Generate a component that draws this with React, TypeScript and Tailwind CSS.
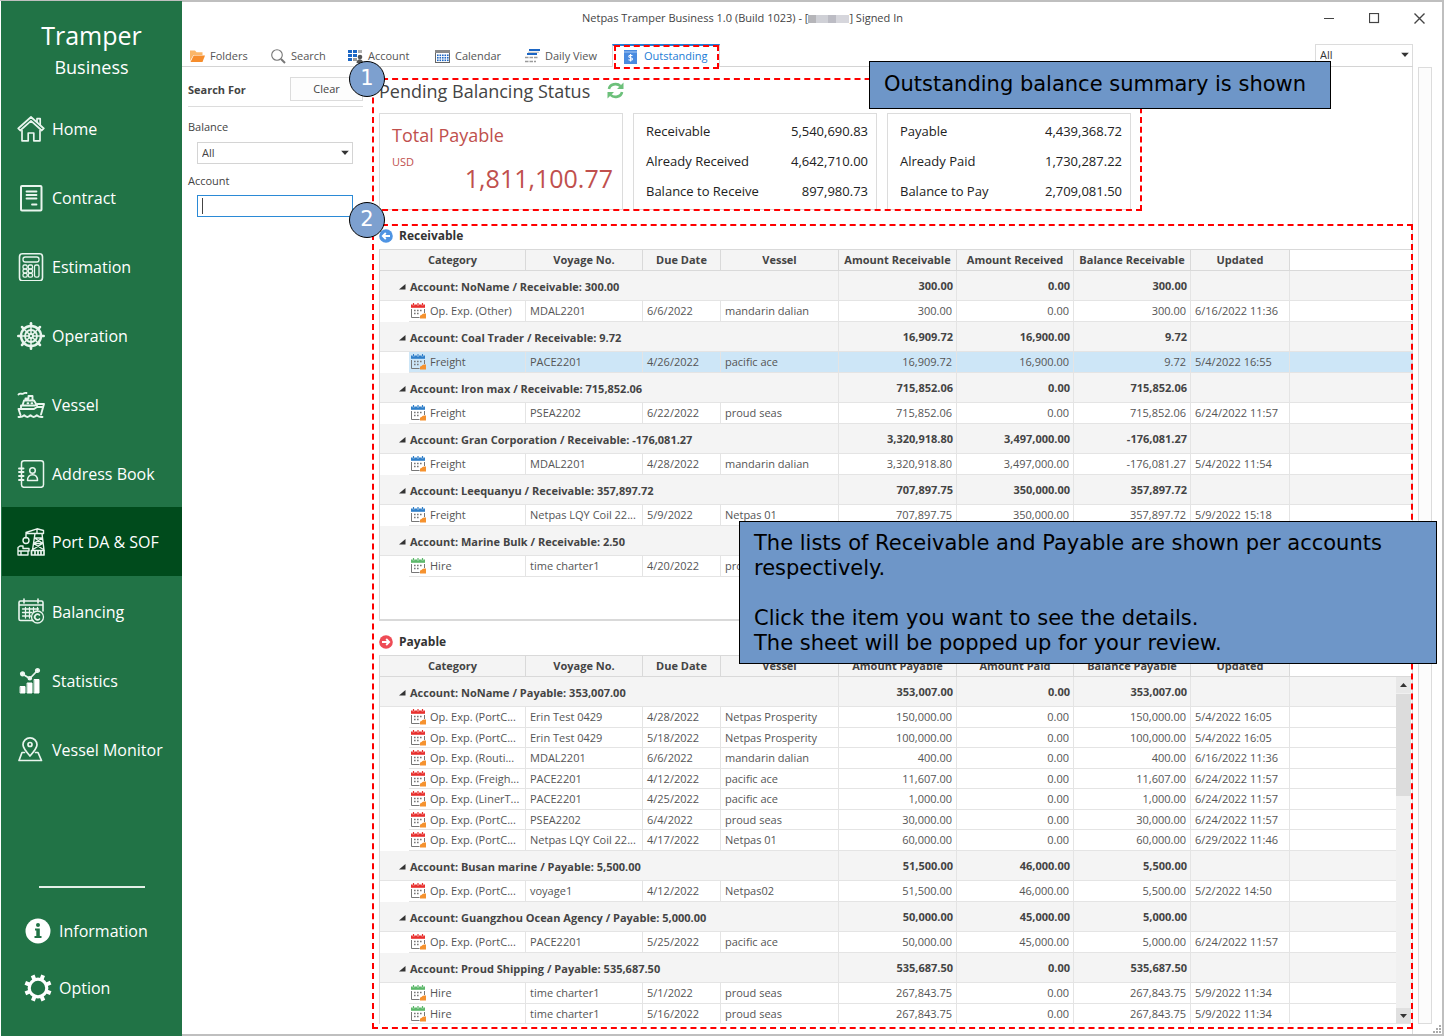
import React from "react";

type IconProps = { children: React.ReactNode; sw?: number };

function Glyph({ children, sw = 1.5 }: IconProps) {
  return (
    <svg width="28" height="28" viewBox="0 0 28 28" fill="none" stroke="#e9f5ee" strokeWidth={sw} strokeLinecap="round" strokeLinejoin="round" className="shrink-0">
      {children}
    </svg>
  );
}

const HomeIcon = () => (
  <Glyph sw={1.7}>
    <path d="M1.200 13.500 14 2l12.800 11.500-2 2L14 5.800 3.200 15.500z" />
    <path d="M5 15.500v10.300h6.200V18h5.600v7.800H23V15.500M20 7V3.700h3.200V10" />
  </Glyph>
);

const ContractIcon = () => (
  <Glyph sw={2}>
    <rect x="4" y="2" width="20.500" height="24.500" rx="1" />
    <path d="M9.500 7.500h10M9.500 11h10M9.500 14.500h10M15 20.500h4.500" strokeWidth="1.800" />
  </Glyph>
);

const CalculatorIcon = () => (
  <Glyph sw={1.3}>
    <rect x="2.500" y="0.800" width="23" height="27" rx="3" strokeWidth="1.600" />
    <rect x="6" y="4" width="16" height="5" rx="2.200" />
    {[6, 11.300].map((x) =>
      [12, 16.200, 20.400].map((y) => <rect key={`${x}-${y}`} x={x} y={y} width="4.200" height="3.800" rx="1.400" />)
    )}
    <rect x="17.500" y="12" width="4.500" height="12.200" rx="1.800" />
  </Glyph>
);

const HelmIcon = () => (
  <Glyph sw={1.5}>
    <circle cx="14" cy="14" r="10" strokeWidth="2.400" />
    <circle cx="14" cy="14" r="6" strokeWidth="1.800" />
    <circle cx="14" cy="14" r="2" strokeWidth="1.800" />
    {[0, 45, 90, 135, 180, 225, 270, 315].map((a) => (
      <g key={a} transform={`rotate(${a} 14 14)`}>
        <path d="M14 11.800V4" />
        <path d="M14 2.800V1.300" strokeWidth="2.600" />
      </g>
    ))}
  </Glyph>
);

const ShipIcon = () => (
  <Glyph sw={1.9}>
    <path d="M1.500 3.500c1.500-2 3 0 4.500-.8C7.500 1.700 8 1.500 9.500 2M8.500 9V7.500h3V5h4v4M5.500 14.500l1.500-5h10l3 5M4 18v-3.500h14l2.500-1.500h6.500l-3 10.500M1.500 18h15.500l3-2h6M1.500 18l2 6" />
    <path d="M1.500 26c2.200.3 4-.2 5.700-1.800 2 2.400 4.300 2.400 6.300 0 2 2.400 4.300 2.400 6.300 0 1.700 1.600 3.500 2.100 5.700 1.800" />
    <path d="M10.500 12.300h.8M14.500 12.300h.8" />
  </Glyph>
);

const AddressIcon = () => (
  <Glyph sw={1.5}>
    <rect x="4.500" y="0.800" width="22" height="26.500" rx="2.500" />
    <path d="M2 8.500h4.500M2 12h4.500M2 16h4.500M2 20h4.500" strokeWidth="1.900" />
    <circle cx="15.500" cy="10.500" r="2.800" />
    <path d="M10.500 20.500c0-3.800 2-5.800 5-5.800s5 2 5 5.800z" />
  </Glyph>
);

const CraneIcon = () => (
  <Glyph sw={1.4}>
    <path d="M9 4.500 20 .800l6.500 1.700v3H9V10M18 5.500 15.500 22M25 5.500 27 22M17.500 10h8M16.500 15.500h9.500M17.500 10l8.500 5.500M25.500 10l-9 5.500M16 21.500l9.500-6M26.500 21.500l-10-6M20 1v4.500" />
    <circle cx="9" cy="12.500" r="3" />
    <path d="M14.500 22.500H27V27H14.500zM18 22.500V27M21 22.500V27M24 22.500V27" strokeWidth="1.700" />
    <path d="M1 27v-7.500l2-1.500h3v2.500h6V23H1M11 23v4H1M4 23v4" />
  </Glyph>
);

const BalancingIcon = () => (
  <Glyph sw={1.3}>
    <path d="M16 22.500H3.500A1.500 1.500 0 0 1 2 21V4.500A1.500 1.500 0 0 1 3.500 3h21A1.500 1.500 0 0 1 26 4.500V13M2 7h24M7 1v4M21 1v4" strokeWidth="1.600" />
    <path d="M5.500 11h16M5.500 14.500h9.500M5.500 18h8M8.500 9.500v10.500M12.500 9.500v10.500M16.500 9.500v4M20.500 9.500v2.500" />
    <circle cx="20.500" cy="19" r="6" />
    <path d="M22.500 17a2.800 2.800 0 1 0 0 4" strokeWidth="1.700" />
  </Glyph>
);

const StatisticsIcon = () => (
  <Glyph sw={1.800}>
    <path d="M3.500 19.500h4.500V26H3.500zM10.500 16H15v10h-4.500zM17.500 12.500H22V26h-4.500z" fill="#fff" stroke="#fff" strokeWidth="1" />
    <path d="M5.500 7 12.800 11.500 20.500 3.500" />
    <circle cx="5.500" cy="6.800" r="1.700" fill="#fff" />
    <circle cx="12.800" cy="11.200" r="1.400" fill="#fff" />
    <circle cx="20.500" cy="3.500" r="1.700" fill="#fff" />
  </Glyph>
);

const MonitorIcon = () => (
  <Glyph sw={1.700}>
    <path d="M13 20C8.500 15 6 12 6 8.800a7 7 0 0 1 14 0c0 3.200-2.500 6.200-7 11.200z" />
    <circle cx="13" cy="8.500" r="2" />
    <path d="M7.500 16.500H5L2 24.500h22.500l-3.500-8h-2.500" />
  </Glyph>
);

const navItems = [
  { label: "Home", Icon: HomeIcon },
  { label: "Contract", Icon: ContractIcon },
  { label: "Estimation", Icon: CalculatorIcon },
  { label: "Operation", Icon: HelmIcon },
  { label: "Vessel", Icon: ShipIcon },
  { label: "Address Book", Icon: AddressIcon },
  { label: "Port DA & SOF", Icon: CraneIcon, active: true },
  { label: "Balancing", Icon: BalancingIcon },
  { label: "Statistics", Icon: StatisticsIcon },
  { label: "Vessel Monitor", Icon: MonitorIcon },
];

function Sidebar() {
  return (
    <aside className="ml-px flex w-[181px] shrink-0 flex-col bg-[#217346] text-white">
      <div className="flex h-[92px] flex-col items-center pt-[18px]">
        <div className="text-[25px] leading-8">Tramper</div>
        <div className="text-lg leading-8">Business</div>
      </div>
      <nav>
        {navItems.map(({ label, Icon, active }) => (
          <button
            key={label}
            type="button"
            className={
              active
                ? "ml-px flex h-[69px] w-[180px] items-center gap-[7px] bg-[#004b1c] pt-px pl-[15px] text-base font-medium whitespace-nowrap"
                : "flex h-[69px] w-full items-center gap-[7px] pt-[2px] pl-4 text-base font-medium whitespace-nowrap"
            }
          >
            <Icon />
            {label}
          </button>
        ))}
      </nav>
      <div className="mt-auto flex flex-col pb-5">
        <div className="mr-[37px] mb-[14px] ml-[38px] h-[2px] bg-[#e3efe8]" />
        <button type="button" className="flex h-[57px] items-center gap-[7px] pl-[23px] text-base font-medium">
          <svg width="28" height="28" viewBox="0 0 28 28">
            <circle cx="14" cy="14" r="12.500" fill="#fff" />
            <circle cx="14" cy="8" r="2" fill="#217346" />
            <path d="M11 11.500h4.800v7.500H17.500v2h-7v-2h1.800v-5.500H11z" fill="#217346" />
          </svg>
          Information
        </button>
        <button type="button" className="flex h-[57px] items-center gap-[7px] pl-[23px] text-base font-medium">
          <svg width="28" height="28" viewBox="0 0 28 28" fill="none" stroke="#fff">
            <circle cx="14" cy="14" r="8.800" strokeWidth="3.200" />
            {[22, 67, 112, 157, 202, 247, 292, 337].map((a) => (
              <path key={a} d="M14 5V.300" strokeWidth="4" transform={`rotate(${a} 14 14)`} />
            ))}
          </svg>
          Option
        </button>
      </div>
    </aside>
  );
}

const FolderIcon = () => (
  <svg width="15" height="14" viewBox="0 0 15 14">
    <path d="M0 12V1.500h5l1.500 1.800h6V6H3.500z" fill="#fbb667" />
    <path d="M3.700 6.500H15L12.500 13H.5z" fill="#f68d2c" />
  </svg>
);
const SearchIcon = () => (
  <svg width="15" height="15" viewBox="0 0 15 15" fill="none" stroke="#777">
    <circle cx="6" cy="6" r="5.300" strokeWidth="1.100" />
    <path d="m10 10 4 4" strokeWidth="1.900" />
  </svg>
);
const AccountIcon = () => (
  <svg width="15" height="14" viewBox="0 0 15 14">
    {[0, 4, 8].map((y) => (
      <g key={y}>
        <rect x="0" y={y + 1} width="4" height="3" fill="#1c66c4" />
        <rect x="5" y={y + 1} width="4" height="3" fill={y === 8 ? "#9a9a9a" : "#1c66c4"} />
      </g>
    ))}
    <rect x="10" y="1" width="4" height="3" fill="#b0b0b0" />
    <circle cx="12" cy="8" r="2.300" fill="#555" />
    <path d="M8.500 14c0-5 6.500-5 6.500 0z" fill="#555" />
  </svg>
);
const CalendarIcon = () => (
  <svg width="15" height="13" viewBox="0 0 15 13">
    <rect x=".5" y=".5" width="14" height="12" fill="#fff" stroke="#666" />
    <path d="M0 0h15v3H0z" fill="#8a8a8a" />
    {[4.500, 7, 9.500].map((y) =>
      [2, 4.500, 7, 9.500, 12].map((x) => <rect key={`${x}${y}`} x={x} y={y} width="1.600" height="1.600" fill="#1c66c4" />)
    )}
  </svg>
);
const DailyIcon = () => (
  <svg width="15" height="14" viewBox="0 0 15 14">
    <path d="M4 1h11M2 5h10" stroke="#1c66c4" strokeWidth="2" />
    <path d="M3 3.300h11" stroke="#bbb" />
    <path d="M0 8.500h13M0 12.500h11" stroke="#9a9a9a" strokeWidth="1.600" strokeDasharray="3.500 1" />
  </svg>
);
const SheetIcon = () => (
  <svg width="13" height="14" viewBox="0 0 13 14">
    <path d="M0 0h13v14H0z" fill="#4a8be0" />
    <path d="M0 2h13" stroke="#a9c9f2" />
    <path d="M8.500 5.700c-.6-.6-3.700-.9-3.700.8 0 1.700 3.700.8 3.700 2.500 0 1.600-3.200 1.400-4 .6M6.600 4v7.500" stroke="#fff" strokeWidth="1.100" fill="none" />
  </svg>
);

const tabs = [
  { label: "Folders", Icon: FolderIcon, width: "w-[81px]" },
  { label: "Search", Icon: SearchIcon, width: "w-[77px]" },
  { label: "Account", Icon: AccountIcon, width: "w-[87px]" },
  { label: "Calendar", Icon: CalendarIcon, width: "w-[90px]" },
  { label: "Daily View", Icon: DailyIcon, width: "w-[87px]" },
];

const Caret = () => (
  <svg width="8" height="5" viewBox="0 0 8 5" className="pointer-events-none absolute top-1/2 right-1 -translate-y-1/2">
    <path d="M0 0h8L4 4.500z" fill="#333" />
  </svg>
);

function TopBar() {
  return (
    <header>
      <div className="flex h-[42px] items-start justify-between">
        <h1 className="pl-[400px] text-[11px] leading-8 whitespace-pre text-[#444]">
          Netpas Tramper Business 1.0 (Build 1023) - [
          <span className="inline-flex h-2 w-[41px] align-middle">
            <span className="w-2 bg-[#b5b5b9]" />
            <span className="w-3 bg-[#cfd0d6]" />
            <span className="w-2 bg-[#bcbcc4]" />
            <span className="flex-1 bg-[#d6d6dc]" />
          </span>
          ] Signed In
        </h1>
        <div className="flex">
          <button type="button" aria-label="Minimize" className="flex h-8 w-[45px] items-center justify-center">
            <svg width="11" height="11" viewBox="0 0 11 11" stroke="#444"><path d="M0 5.500h10" /></svg>
          </button>
          <button type="button" aria-label="Maximize" className="flex h-8 w-[45px] items-center justify-center">
            <svg width="11" height="11" viewBox="0 0 11 11" stroke="#444" fill="none"><rect x=".5" y=".5" width="9" height="9" strokeWidth="1.200" /></svg>
          </button>
          <button type="button" aria-label="Close" className="flex h-8 w-[45px] items-center justify-center">
            <svg width="11" height="11" viewBox="0 0 11 11" stroke="#444" strokeWidth="1.400"><path d="m.5.500 10 10M10.500.500l-10 10" /></svg>
          </button>
        </div>
      </div>
      <div className="mr-[29px] flex h-[23px] border-b border-[#d4d4d4] pl-2 text-[#555]">
        {tabs.map(({ label, Icon, width }) => (
          <button key={label} type="button" className={`${width} flex items-center gap-[5px] pt-[2px] whitespace-nowrap`}>
            <Icon />
            {label}
          </button>
        ))}
        <button type="button" className="relative flex h-[23px] w-[108px] items-center gap-[7px] border-t-2 border-r border-l border-t-[#2b7cd3] border-r-[#d9d9d9] border-l-[#d9d9d9] bg-white pl-[11px] text-[#1c7cd5]">
          <SheetIcon />
          Outstanding
          <span className="absolute -top-px right-0 -bottom-[2px] left-px border-2 border-dashed border-[#f00]" />
        </button>
        <div className="relative ml-auto h-[22px] w-[98px]">
          <select aria-label="Filter" className="h-full w-full appearance-none border border-b-0 border-[#dcdcdc] bg-white pl-1 text-[11px] text-[#333]">
            <option>All</option>
          </select>
          <Caret />
        </div>
      </div>
    </header>
  );
}

function FilterPanel() {
  return (
    <form className="w-[191px] shrink-0 pt-[10px] pr-[10px] pl-[6px] text-[#444]">
      <div className="flex h-[30px] items-start justify-between border-b border-[#dcdcdc]">
        <h2 className="pt-[5px] font-bold">Search For</h2>
        <button type="button" className="h-6 w-[73px] border border-[#dcdcdc] bg-[#fdfdfd]">Clear</button>
      </div>
      <label htmlFor="balance" className="mt-[12px] block leading-4">Balance</label>
      <div className="relative mt-[7px] mr-[10px] ml-[9px]">
        <select id="balance" className="block h-[22px] w-full appearance-none border border-[#d4d4d4] bg-white pl-1 text-[11px]">
          <option>All</option>
        </select>
        <Caret />
      </div>
      <label htmlFor="account" className="mt-[9px] block leading-4">Account</label>
      <div className="relative mt-[6px] mr-[10px] ml-[9px]">
        <input id="account" type="text" className="block h-[22px] w-full border border-[#2b8ad6] bg-white pl-1 outline-none" />
        <span className="absolute top-[3px] left-[5px] h-4 w-px bg-[#444]" />
      </div>
    </form>
  );
}

function SummaryCard({ rows }: { rows: [string, string][] }) {
  return (
    <dl className="flex h-[97px] w-[244px] flex-col border border-[#dcdcdc] bg-white pt-[3px] pr-2 pl-3 text-[13px] text-[#222]">
      {rows.map(([k, v]) => (
        <div key={k} className="flex h-[30px] items-center justify-between">
          <dt>{k}</dt>
          <dd>{v}</dd>
        </div>
      ))}
    </dl>
  );
}

function Summary() {
  return (
    <section className="relative">
      <div className="flex h-[46px] items-center gap-[17px] pt-px text-[#444]">
        <h2 className="text-lg leading-6">Pending Balancing Status</h2>
        <button type="button" aria-label="Refresh">
          <svg width="17" height="17" viewBox="0 0 17 17" fill="none" stroke="#6cc07a" strokeWidth="2.600">
            <path d="M2 7a6.500 5.500 0 0 1 11.500-2.800M15 10a6.500 5.500 0 0 1-11.500 2.800" />
            <path d="M16.500.500V7H10zM.5 16.500V10H7z" fill="#6cc07a" stroke="none" />
          </svg>
        </button>
      </div>
      <div className="flex gap-[10px]">
        <div className="flex h-[97px] w-[244px] flex-col border border-[#dcdcdc] bg-white pt-[9px] pr-[9px] pl-3 text-[#c0504d]">
          <div className="text-lg leading-6">Total Payable</div>
          <div className="mt-[7px] leading-4">USD</div>
          <div className="-mt-[6px] text-right text-[25px] leading-7">1,811,100.77</div>
        </div>
        <SummaryCard rows={[["Receivable", "5,540,690.83"], ["Already Received", "4,642,710.00"], ["Balance to Receive", "897,980.73"]]} />
        <SummaryCard rows={[["Payable", "4,439,368.72"], ["Already Paid", "1,730,287.22"], ["Balance to Pay", "2,709,081.50"]]} />
      </div>
      <div className="pointer-events-none absolute top-[11px] -bottom-px -left-[7px] w-[770px] border-2 border-dashed border-[#f00]" />
      <div className="absolute -top-[6px] left-[490px] flex h-12 w-[462px] items-center border border-black bg-[#6e96c8] px-[14px] font-[DejaVu_Sans,Verdana,sans-serif] text-[21px] whitespace-nowrap text-black">
        Outstanding balance summary is shown
      </div>
      <StepBadge n="1" place="-top-[6px] -left-[30px]" />
    </section>
  );
}

function StepBadge({ n, place }: { n: string; place: string }) {
  return (
    <span className={`absolute ${place} flex h-9 w-9 items-center justify-center rounded-full border border-black bg-[#7da0cf] font-[DejaVu_Sans,Verdana,sans-serif] text-[21px] text-white`}>
      {n}
    </span>
  );
}

type Item = [kind: "red" | "blue" | "green", category: string, voyage: string, due: string, vessel: string, amount: string, settled: string, balance: string, updated: string];
type Group = { title: string; totals: [string, string, string]; items: Item[]; selected?: boolean };

const receivable: Group[] = [
  { title: "Account: NoName / Receivable: 300.00", totals: ["300.00", "0.00", "300.00"], items: [["red", "Op. Exp. (Other)", "MDAL2201", "6/6/2022", "mandarin dalian", "300.00", "0.00", "300.00", "6/16/2022 11:36"]] },
  { title: "Account: Coal Trader / Receivable: 9.72", totals: ["16,909.72", "16,900.00", "9.72"], selected: true, items: [["blue", "Freight", "PACE2201", "4/26/2022", "pacific ace", "16,909.72", "16,900.00", "9.72", "5/4/2022 16:55"]] },
  { title: "Account: Iron max / Receivable: 715,852.06", totals: ["715,852.06", "0.00", "715,852.06"], items: [["blue", "Freight", "PSEA2202", "6/22/2022", "proud seas", "715,852.06", "0.00", "715,852.06", "6/24/2022 11:57"]] },
  { title: "Account: Gran Corporation / Receivable: -176,081.27", totals: ["3,320,918.80", "3,497,000.00", "-176,081.27"], items: [["blue", "Freight", "MDAL2201", "4/28/2022", "mandarin dalian", "3,320,918.80", "3,497,000.00", "-176,081.27", "5/4/2022 11:54"]] },
  { title: "Account: Leequanyu / Receivable: 357,897.72", totals: ["707,897.75", "350,000.00", "357,897.72"], items: [["blue", "Freight", "Netpas LQY Coil 22...", "5/9/2022", "Netpas 01", "707,897.75", "350,000.00", "357,897.72", "5/9/2022 15:18"]] },
  { title: "Account: Marine Bulk / Receivable: 2.50", totals: ["", "", ""], items: [["green", "Hire", "time charter1", "4/20/2022", "pro", "", "", "", ""]] },
];

const payable: Group[] = [
  {
    title: "Account: NoName / Payable: 353,007.00",
    totals: ["353,007.00", "0.00", "353,007.00"],
    items: [
      ["red", "Op. Exp. (PortC...", "Erin Test 0429", "4/28/2022", "Netpas Prosperity", "150,000.00", "0.00", "150,000.00", "5/4/2022 16:05"],
      ["red", "Op. Exp. (PortC...", "Erin Test 0429", "5/18/2022", "Netpas Prosperity", "100,000.00", "0.00", "100,000.00", "5/4/2022 16:05"],
      ["red", "Op. Exp. (Routi...", "MDAL2201", "6/6/2022", "mandarin dalian", "400.00", "0.00", "400.00", "6/16/2022 11:36"],
      ["red", "Op. Exp. (Freigh...", "PACE2201", "4/12/2022", "pacific ace", "11,607.00", "0.00", "11,607.00", "6/24/2022 11:57"],
      ["red", "Op. Exp. (LinerT...", "PACE2201", "4/25/2022", "pacific ace", "1,000.00", "0.00", "1,000.00", "6/24/2022 11:57"],
      ["red", "Op. Exp. (PortC...", "PSEA2202", "6/4/2022", "proud seas", "30,000.00", "0.00", "30,000.00", "6/24/2022 11:57"],
      ["red", "Op. Exp. (PortC...", "Netpas LQY Coil 22...", "4/17/2022", "Netpas 01", "60,000.00", "0.00", "60,000.00", "6/29/2022 11:46"],
    ],
  },
  { title: "Account: Busan marine / Payable: 5,500.00", totals: ["51,500.00", "46,000.00", "5,500.00"], items: [["red", "Op. Exp. (PortC...", "voyage1", "4/12/2022", "Netpas02", "51,500.00", "46,000.00", "5,500.00", "5/2/2022 14:50"]] },
  { title: "Account: Guangzhou Ocean Agency / Payable: 5,000.00", totals: ["50,000.00", "45,000.00", "5,000.00"], items: [["red", "Op. Exp. (PortC...", "PACE2201", "5/25/2022", "pacific ace", "50,000.00", "45,000.00", "5,000.00", "6/24/2022 11:57"]] },
  {
    title: "Account: Proud Shipping / Payable: 535,687.50",
    totals: ["535,687.50", "0.00", "535,687.50"],
    items: [
      ["green", "Hire", "time charter1", "5/1/2022", "proud seas", "267,843.75", "0.00", "267,843.75", "5/9/2022 11:34"],
      ["green", "Hire", "time charter1", "5/16/2022", "proud seas", "267,843.75", "0.00", "267,843.75", "5/9/2022 11:34"],
    ],
  },
];

const kindColor = { red: "#e8302e", blue: "#2f7fc9", green: "#5cb86a" };

function KindIcon({ kind }: { kind: Item[0] }) {
  return (
    <svg width="15" height="16" viewBox="0 0 15 16" className="shrink-0">
      <path d="M.5 6v8.500H8.500M13.500 6v4" stroke="#777" fill="none" />
      <path d="M0 1.500h14v3.300H0z" fill={kindColor[kind]} />
      <path d="M1.700 1.200h1.600M6.200 1.200h1.600M10.700 1.200h1.600" stroke="#fff" strokeWidth="2.400" />
      <path d="M2.500 0v2.500M7 0v2.500M11.500 0v2.500" stroke={kindColor[kind]} strokeWidth="1.200" />
      <path d="M3 7.500h8.500M3 10.500h6" stroke="#777" strokeWidth="1.300" strokeDasharray="1.600 1.400" />
      <path d="M9 13c0-1 1.500-.5 2-1.500s1.500-1 4-1v5H9z" fill="#f5922f" />
    </svg>
  );
}

function Grid({ columns, groups }: { columns: string[]; groups: Group[] }) {
  const th = "h-[21px] border-r border-b border-[#d9d9d9] p-0 text-center font-bold";
  const td = "overflow-hidden border-r border-b border-[#e4e4e4] px-1 py-0";
  return (
    <table className="w-full table-fixed border-separate border-spacing-0 leading-4 whitespace-nowrap">
      <colgroup>
        <col className="w-[29px]" />
        <col className="w-[117px]" />
        <col className="w-[117px]" />
        <col className="w-[78px]" />
        <col className="w-[118px]" />
        <col className="w-[118px]" />
        <col className="w-[117px]" />
        <col className="w-[117px]" />
        <col className="w-[99px]" />
        <col />
      </colgroup>
      <thead>
        <tr className="bg-[#f4f4f4] text-[#444]">
          {columns.map((c, i) => (
            <th key={c} colSpan={i === 0 ? 2 : 1} className={th}>{c}</th>
          ))}
          <td className="border-b border-[#d9d9d9] bg-white p-0" />
        </tr>
      </thead>
      {groups.map((g) => (
        <tbody key={g.title}>
          <tr className="h-[30px] bg-[#f4f4f4] font-bold text-[#444]">
            <th colSpan={5} scope="rowgroup" className="border-r border-b border-[#e4e4e4] p-0 text-left">
              <span className="flex items-center gap-1 pt-[2px] pl-[19px]">
                <svg width="7" height="6" viewBox="0 0 7 6"><path d="M6.500 0v5.500H0z" fill="#333" /></svg>
                {g.title}
              </span>
            </th>
            {g.totals.map((t, i) => (
              <td key={i} className="border-r border-b border-[#e4e4e4] py-0 pr-[3px] pl-1 text-right">{t}</td>
            ))}
            <td className={td} />
            <td className="border-b border-[#e4e4e4] p-0" />
          </tr>
          {g.items.map(([kind, category, ...cells], r) => (
            <tr key={r} className={`${r % 2 ? "h-5" : "h-[21px]"} text-[#555]`}>
              <td className="bg-white p-0" />
              <td className={`${g.selected ? "bg-[#cde6f7]" : "bg-white"} overflow-hidden border-r border-b border-[#e4e4e4] py-0 pr-0 pl-[2px]`}>
                <span className="flex items-center gap-1">
                  <KindIcon kind={kind} />
                  {category}
                </span>
              </td>
              {cells.map((c, i) => (
                <td key={i} className={`${td} ${g.selected ? "bg-[#cde6f7]" : "bg-white"} ${i >= 3 && i <= 5 ? "text-right" : "text-left"}`}>{c}</td>
              ))}
              <td className={`${g.selected ? "bg-[#cde6f7]" : "bg-white"} border-b border-[#e4e4e4] p-0`} />
            </tr>
          ))}
        </tbody>
      ))}
    </table>
  );
}

function RoundArrow({ color, back }: { color: string; back?: boolean }) {
  return (
    <svg width="14" height="14" viewBox="0 0 14 14">
      <circle cx="7" cy="7" r="6.800" fill={color} />
      <path d={back ? "M11 7H4M6.800 4 3.800 7l3 3" : "M3 7h7M7.200 4l3 3-3 3"} stroke="#fff" strokeWidth="1.800" fill="none" />
    </svg>
  );
}

function Ledgers() {
  return (
    <section className="relative mt-[14px]">
      <h3 className="flex h-[25px] items-center gap-[6px] pb-[2px] text-xs font-bold text-[#333]">
        <RoundArrow color="#4f94e3" back />
        Receivable
      </h3>
      <div className="h-[372px] border-t border-b-2 border-l border-[#d9d9d9]">
        <Grid columns={["Category", "Voyage No.", "Due Date", "Vessel", "Amount Receivable", "Amount Received", "Balance Receivable", "Updated"]} groups={receivable} />
      </div>
      <h3 className="flex h-[34px] items-center gap-[6px] pt-[7px] text-xs font-bold text-[#333]">
        <RoundArrow color="#ee4b55" />
        Payable
      </h3>
      <div className="relative border-t border-l border-[#d9d9d9]">
        <Grid columns={["Category", "Voyage No.", "Due Date", "Vessel", "Amount Payable", "Amount Paid", "Balance Payable", "Updated"]} groups={payable} />
        <div className="absolute top-[21px] right-px bottom-0 flex w-[15px] flex-col bg-[#f0f0f0]">
          <button type="button" aria-label="Scroll up" className="flex h-4 items-center justify-center bg-[#e8e8e8]">
            <svg width="7" height="4" viewBox="0 0 7 4"><path d="M0 4h7L3.500 0z" fill="#333" /></svg>
          </button>
          <div className="mt-px h-[102px] bg-[#dcdcdc]" />
          <button type="button" aria-label="Scroll down" className="mt-auto flex h-4 items-center justify-center bg-[#e0e0e0]">
            <svg width="7" height="4" viewBox="0 0 7 4"><path d="M0 0h7L3.500 4z" fill="#333" /></svg>
          </button>
        </div>
      </div>
      <div className="pointer-events-none absolute top-0 -right-px -bottom-[5px] -left-[7px] border-2 border-dashed border-[#f00]" />
      <div className="absolute top-[297px] -right-[25px] left-[360px] h-[143px] border border-black bg-[#6e96c8] px-[14px] pt-[9px] font-[DejaVu_Sans,Verdana,sans-serif] text-[21px] leading-[25px] text-black">
        <p>The lists of Receivable and Payable are shown per accounts respectively.</p>
        <p className="mt-[25px]">Click the item you want to see the details.</p>
        <p>The sheet will be popped up for your review.</p>
      </div>
      <StepBadge n="2" place="-top-[22px] -left-[30px]" />
    </section>
  );
}

export default function App() {
  return (
    <div className="flex min-h-screen border-t border-[#bfbfbf] bg-white font-[Open_Sans,Noto_Sans,sans-serif] text-[11px]">
      <Sidebar />
      <div className="relative flex min-w-0 flex-1 flex-col border-t border-r-2 border-b-2 border-[#bfbfbf]">
        <TopBar />
        <div className="flex flex-1">
          <FilterPanel />
          <main className="min-w-0 flex-1 border-r border-[#dcdcdc] pl-[6px]">
            <Summary />
            <Ledgers />
          </main>
          <div className="mr-[10px] mb-[10px] ml-[5px] w-[14px] shrink-0 border border-[#dcdcdc] bg-[#fcfcfc]" />
        </div>
        <svg width="9" height="9" viewBox="0 0 9 9" className="absolute right-0 bottom-0" fill="#aaa">
          <path d="M6 0h2v2H6zM3 3h2v2H3zM6 3h2v2H6zM0 6h2v2H0zM3 6h2v2H3zM6 6h2v2H6z" />
        </svg>
      </div>
    </div>
  );
}
